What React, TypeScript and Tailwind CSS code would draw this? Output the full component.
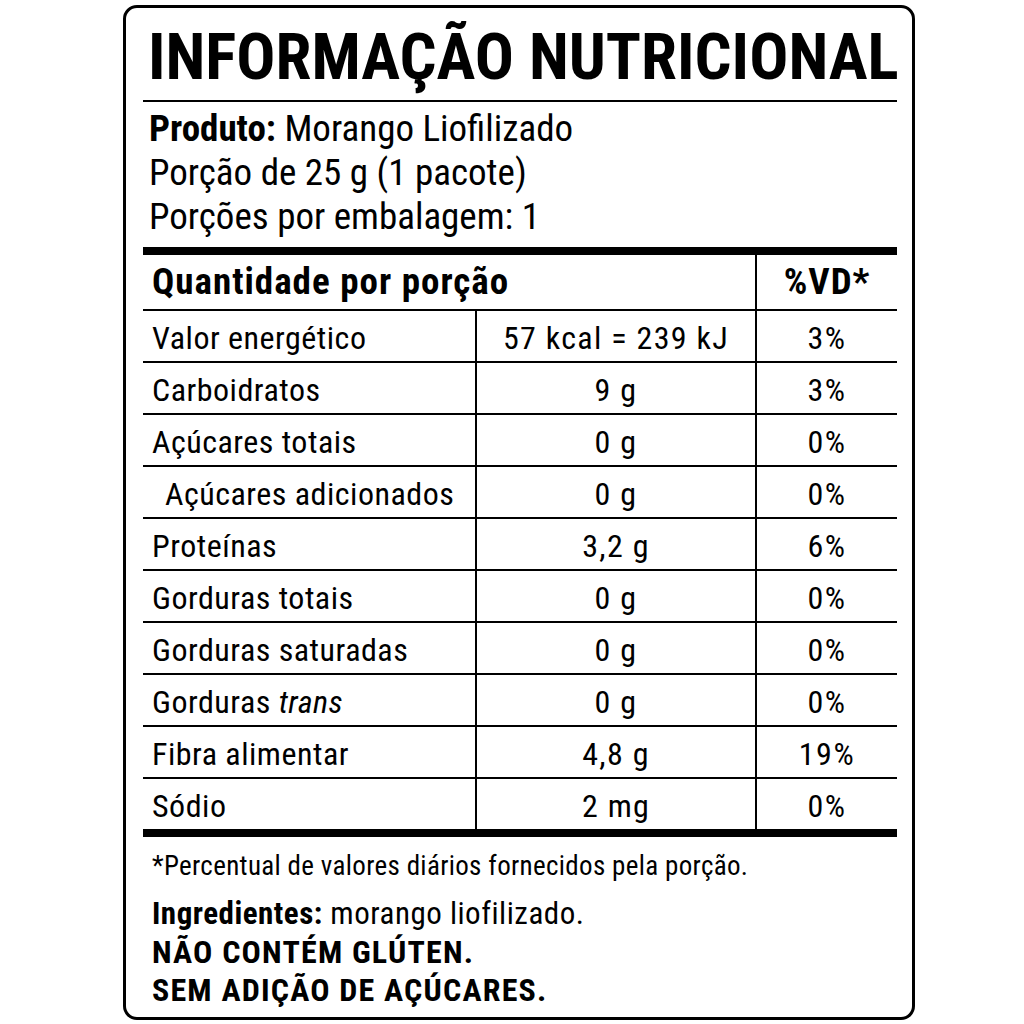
type Row = {
  name: React.ReactNode;
  amount: string;
  vd: string;
  indent?: boolean;
};

const rows: Row[] = [
  { name: 'Valor energético', amount: '57 kcal = 239 kJ', vd: '3%' },
  { name: 'Carboidratos', amount: '9 g', vd: '3%' },
  { name: 'Açúcares totais', amount: '0 g', vd: '0%' },
  { name: 'Açúcares adicionados', amount: '0 g', vd: '0%', indent: true },
  { name: 'Proteínas', amount: '3,2 g', vd: '6%' },
  { name: 'Gorduras totais', amount: '0 g', vd: '0%' },
  { name: 'Gorduras saturadas', amount: '0 g', vd: '0%' },
  {
    name: (
      <>
        Gorduras <i>trans</i>
      </>
    ),
    amount: '0 g',
    vd: '0%',
  },
  { name: 'Fibra alimentar', amount: '4,8 g', vd: '19%' },
  { name: 'Sódio', amount: '2 mg', vd: '0%' },
];

const NutritionRow = ({ name, amount, vd, indent }: Row) => (
  <div className="flex h-[52px] border-t-2 border-black">
    <div className={`w-[332px] flex items-center pt-[3px] tracking-[0.5px] ${indent ? 'pl-[22px]' : 'pl-[9px]'}`}>
      <span>{name}</span>
    </div>
    <div className="w-[280px] flex items-center justify-center pt-[3px] border-l-2 border-black tracking-[1.3px]">
      {amount}
    </div>
    <div className="flex-1 flex items-center justify-center pt-[3px] border-l-2 border-black tracking-[1.6px]">{vd}</div>
  </div>
);

export default function App() {
  return (
    <div className="w-[1024px] h-[1024px] bg-white pt-[5px] pl-[123px] font-['Roboto',sans-serif] [font-stretch:75%] text-black">
      <div className="w-[792px] h-[1015px] border-[3px] border-black rounded-[14px] pl-[17px] pr-[15px] pt-[17px] flex flex-col">
        <h1 className="shrink-0 text-[65px] leading-[65px] font-bold whitespace-nowrap pl-[5px]">INFORMAÇÃO NUTRICIONAL</h1>
        <div className="shrink-0 mt-[10px] border-t-2 border-black" />

        <div className="shrink-0 pt-[5px] pl-[6px] text-[37px] leading-[44px]">
          <p>
            <b>Produto:</b> Morango Liofilizado
          </p>
          <p>Porção de 25 g (1 pacote)</p>
          <p>Porções por embalagem: 1</p>
        </div>

        <div className="shrink-0 mt-[8px] h-[8px] bg-black" />

        <div className="shrink-0 flex h-[54px] text-[37px] font-bold tracking-[1px]">
          <div className="w-[612px] flex items-center pl-[9px]">Quantidade por porção</div>
          <div className="flex-1 flex items-center justify-center border-l-2 border-black">%VD*</div>
        </div>

        <div className="shrink-0 text-[32px] leading-[32px]">
          {rows.map((r, i) => (
            <NutritionRow key={i} {...r} />
          ))}
        </div>

        <div className="shrink-0 h-[8px] bg-black" />

        <p className="shrink-0 mt-[14px] pl-[9px] text-[27px] leading-[30px] tracking-[0.33px]">
          *Percentual de valores diários fornecidos pela porção.
        </p>

        <div className="shrink-0 mt-[14px] pl-[9px] text-[31px] leading-[38px]">
          <p className="tracking-[0.5px]">
            <b>Ingredientes:</b> morango liofilizado.
          </p>
          <p className="font-bold text-[32px] tracking-[1.2px]">NÃO CONTÉM GLÚTEN.</p>
          <p className="font-bold text-[32px] tracking-[1.2px]">SEM ADIÇÃO DE AÇÚCARES.</p>
        </div>
      </div>
    </div>
  );
}
